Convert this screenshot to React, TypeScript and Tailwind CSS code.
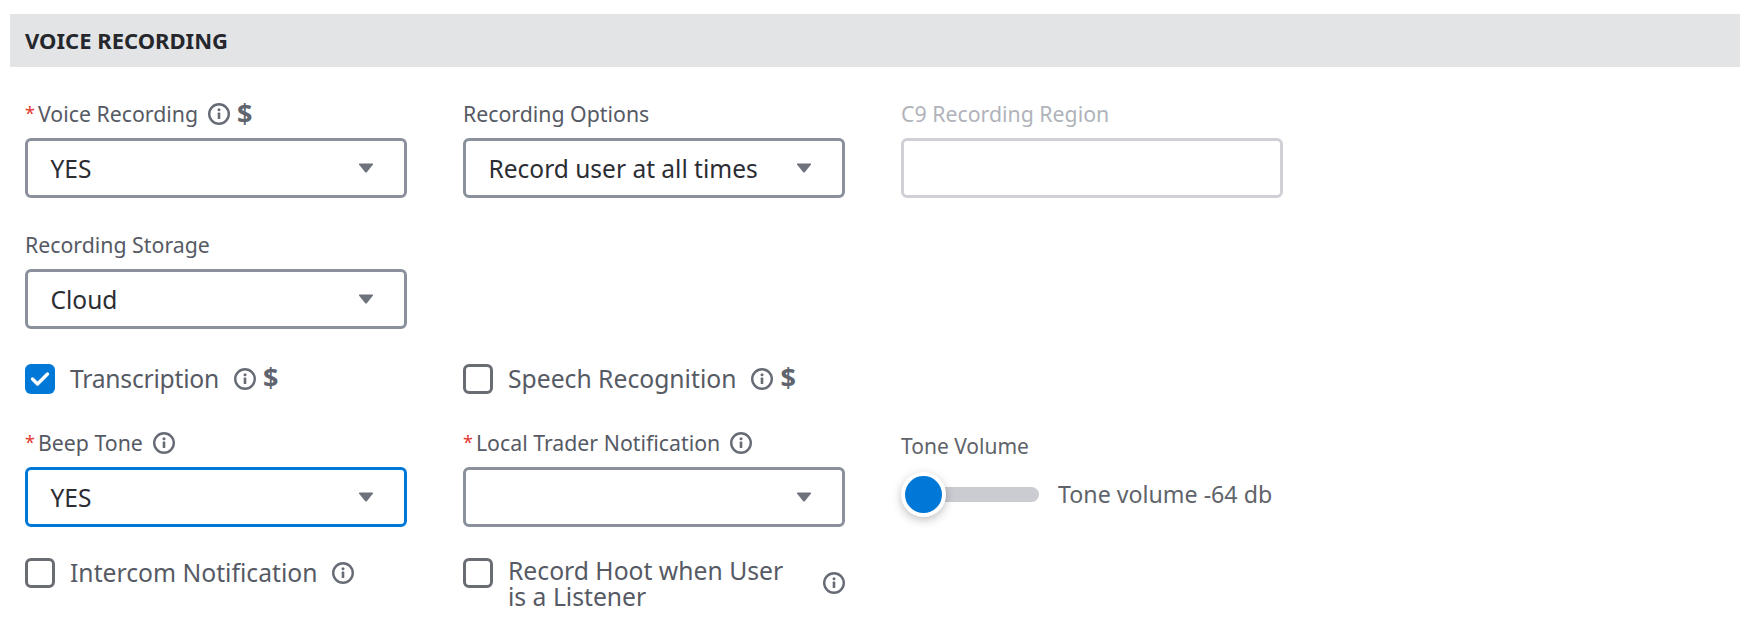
const font = { fontFamily: '"Noto Sans", sans-serif' };

function InfoIcon() {
  return (
    <svg width="22" height="22" viewBox="0 0 22 22" className="shrink-0">
      <circle cx="11" cy="11" r="9.800" fill="none" stroke="#666b75" strokeWidth="2.400" />
      <circle cx="11" cy="6.800" r="1.500" fill="#666b75" />
      <rect x="9.700" y="9.600" width="2.600" height="6.400" rx="0.600" fill="#666b75" />
    </svg>
  );
}

function Dollar() {
  return <span className="text-[27px] leading-none font-bold text-[#5f646e]">$</span>;
}

function Label({ text, required, info, dollar }: { text: string; required?: boolean; info?: boolean; dollar?: boolean }) {
  return (
    <div className="flex h-[24px] items-center text-[21.3px] leading-[24px] text-[#565a64]">
      {required && <span className="mr-[3px] mt-[-2px] text-[18px] text-[#e5382f]">*</span>}
      <span>{text}</span>
      {info && (
        <span className="ml-[10px]">
          <InfoIcon />
        </span>
      )}
      {dollar && (
        <span className="ml-[7px]">
          <Dollar />
        </span>
      )}
    </div>
  );
}

function Select({ value, focused }: { value?: string; focused?: boolean }) {
  return (
    <div
      className={`mt-[12px] flex h-[60px] w-[382px] items-center justify-between rounded-[6px] border-[3px] bg-white pl-[22.500px] pr-[30px] text-[24.5px] text-[#2b2d33] ${
        focused ? "border-[#0078d7]" : "border-[#8a909c]"
      }`}
    >
      <span className="pt-[2px]">{value}</span>
      <svg width="16" height="10" viewBox="0 0 16 10">
        <path d="M1 1.500 Q0.500 0.500 2 0.500 H14 Q15.500 0.500 15 1.500 L9 9 Q8 10 7 9 Z" fill="#6e727c" />
      </svg>
    </div>
  );
}

function Checkbox({ checked }: { checked?: boolean }) {
  if (checked) {
    return (
      <span className="flex h-[30px] w-[30px] shrink-0 items-center justify-center rounded-[6px] bg-[#0078d7]">
        <svg width="20" height="16" viewBox="0 0 20 16">
          <path d="M2.500 8 L7.500 13 L17.500 3" fill="none" stroke="#fff" strokeWidth="3.400" strokeLinecap="round" strokeLinejoin="round" />
        </svg>
      </span>
    );
  }
  return <span className="h-[30px] w-[30px] shrink-0 rounded-[6px] border-[3.500px] border-[#696c72] bg-white" />;
}

export default function App() {
  return (
    <div className="min-h-screen bg-white px-[10px] pt-[14px]" style={font}>
      <div className="flex h-[53px] items-center bg-[#e3e4e6] pl-[15px] text-[22px] font-bold text-[#25272c]">
        VOICE RECORDING
      </div>

      <div className="px-[15px]">
        <div className="mt-[35px] flex gap-[56px]">
          <div className="w-[382px]">
            <Label text="Voice Recording" required info dollar />
            <Select value="YES" />
          </div>
          <div className="w-[382px]">
            <Label text="Recording Options" />
            <Select value="Record user at all times" />
          </div>
          <div className="w-[382px]">
            <div className="flex h-[24px] items-center text-[21.3px] leading-[24px] text-[#b0b3ba]">C9 Recording Region</div>
            <div className="mt-[12px] h-[60px] w-[382px] rounded-[6px] border-[3px] border-[#cfd1d6] bg-white" />
          </div>
        </div>

        <div className="mt-[35px]">
          <Label text="Recording Storage" />
          <Select value="Cloud" />
        </div>

        <div className="mt-[35px] flex h-[30px] gap-[56px]">
          <div className="flex w-[382px] items-center text-[24.7px] text-[#565a64]">
            <Checkbox checked />
            <span className="ml-[15px] tracking-[-0.25px]">Transcription</span>
            <span className="ml-[15px]"><InfoIcon /></span>
            <span className="ml-[7px]"><Dollar /></span>
          </div>
          <div className="flex w-[382px] items-center text-[24.7px] text-[#565a64]">
            <Checkbox />
            <span className="ml-[15px]">Speech Recognition</span>
            <span className="ml-[15px]"><InfoIcon /></span>
            <span className="ml-[7px]"><Dollar /></span>
          </div>
        </div>

        <div className="mt-[37px] flex gap-[56px]">
          <div className="w-[382px]">
            <Label text="Beep Tone" required info />
            <Select value="YES" focused />
          </div>
          <div className="w-[382px]">
            <Label text="Local Trader Notification" required info />
            <Select />
          </div>
          <div className="w-[382px] pt-[3px]">
            <div className="flex h-[24px] items-center text-[21px] leading-[24px] text-[#60636a]">Tone Volume</div>
            <div className="mt-[19px] flex items-center">
              <div className="relative h-[15px] w-[138px] rounded-full bg-[#cbccd2]">
                <div className="absolute left-0 top-[-15px] h-[45px] w-[45px] rounded-full border-[4px] border-white bg-[#0078d7] shadow-[0_3px_10px_rgba(0,0,0,0.25)]" />
              </div>
              <span className="ml-[19px] text-[23.2px] text-[#60636a]">Tone volume -64 db</span>
            </div>
          </div>
        </div>

        <div className="mt-[31px] flex gap-[56px]">
          <div className="flex h-[30px] w-[382px] items-center text-[24.7px] text-[#565a64]">
            <Checkbox />
            <span className="ml-[15px]">Intercom Notification</span>
            <span className="ml-[15px]"><InfoIcon /></span>
          </div>
          <div className="flex w-[382px] items-start text-[24.7px] leading-[26px] text-[#565a64]">
            <Checkbox />
            <span className="ml-[15px] w-[285px]">Record Hoot when User is a Listener</span>
            <span className="ml-auto mt-[14px]"><InfoIcon /></span>
          </div>
        </div>
      </div>
    </div>
  );
}
